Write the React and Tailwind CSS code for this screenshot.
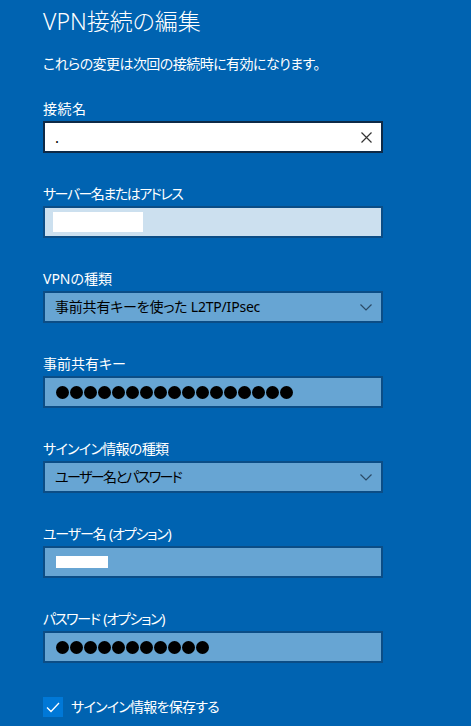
import React from "react";

const font = { fontFamily: '"Noto Sans", "Noto Sans CJK JP", sans-serif' };

function Dots({ n }) {
  return (
    <div className="flex gap-px">
      {Array.from({ length: n }).map((_, i) => (
        <div key={i} className="w-[13px] h-[13px] rounded-full bg-black" />
      ))}
    </div>
  );
}

function Chevron() {
  return (
    <svg width="12" height="7" viewBox="0 0 12 7" className="shrink-0">
      <path d="M0.5 0.5 L6 6 L11.5 0.5" fill="none" stroke="#2b4a66" strokeWidth="1.2" />
    </svg>
  );
}

const txt = "text-[14px] leading-[20px] [font-feature-settings:'palt']";

function Field({ label, track, children }) {
  return (
    <div className="flex flex-col">
      <div className={`${txt} ${track} text-white`}>{label}</div>
      <div className="mt-[2px]">{children}</div>
    </div>
  );
}

const boxBase = "w-[340px] h-[32px] border-2 flex items-center";

export default function App() {
  return (
    <div
      style={font}
      className="w-[471px] h-[726px] bg-[#0063b1] overflow-hidden pl-[43px] pt-[5px] text-white"
    >
      <h1 className="text-[23px] leading-[32px] font-light text-white [font-feature-settings:'palt']">
        VPN接続の編集
      </h1>
      <p className={`mt-[17px] ${txt} tracking-[-0.55px]`}>
        これらの変更は次回の接続時に有効になります。
      </p>

      <div className="mt-[25px] flex flex-col gap-[31px]">
        <Field label="接続名" track="tracking-[0.5px]">
          <div className={`${boxBase} bg-white border-[#0e2a47] pl-[10px] pr-[9px] justify-between`}>
            <span className="text-black text-[15px] leading-[20px]">.</span>
            <svg width="11" height="11" viewBox="0 0 11 11">
              <path d="M0.5 0.5 L10.5 10.5 M10.5 0.5 L0.5 10.5" stroke="#333" strokeWidth="1.2" />
            </svg>
          </div>
        </Field>
        <Field label="サーバー名またはアドレス" track="tracking-[-1.5px]">
          <div className={`${boxBase} bg-[#cce0ef] border-[#0b4d86] pl-[8px]`}>
            <div className="w-[90px] h-[20px] bg-white" />
          </div>
        </Field>
        <Field label="VPNの種類" track="tracking-[0px]">
          <div className={`${boxBase} bg-[#67a5d3] border-[#0b4d86] pl-[10px] pr-[9px] justify-between`}>
            <span className={`text-black ${txt} tracking-[-0.2px]`}>事前共有キーを使った L2TP/IPsec</span>
            <Chevron />
          </div>
        </Field>
        <Field label="事前共有キー" track="tracking-[0px]">
          <div className={`${boxBase} bg-[#67a5d3] border-[#0b4d86] pl-[11px]`}>
            <Dots n={17} />
          </div>
        </Field>
        <Field label="サインイン情報の種類" track="tracking-[-0.7px]">
          <div className={`${boxBase} bg-[#67a5d3] border-[#0b4d86] pl-[10px] pr-[9px] justify-between`}>
            <span className={`text-black ${txt} tracking-[-1.6px]`}>ユーザー名とパスワード</span>
            <Chevron />
          </div>
        </Field>
        <Field
          label={<>ユーザー名<span className="tracking-normal"> </span>(オプション)</>}
          track="tracking-[-1.2px]"
        >
          <div className={`${boxBase} bg-[#67a5d3] border-[#0b4d86] pl-[11px]`}>
            <div className="w-[52px] h-[12px] bg-white" />
          </div>
        </Field>
        <Field
          label={<>パスワード<span className="tracking-normal"> </span>(オプション)</>}
          track="tracking-[-1.3px]"
        >
          <div className={`${boxBase} bg-[#67a5d3] border-[#0b4d86] pl-[11px]`}>
            <Dots n={11} />
          </div>
        </Field>
      </div>

      <div className="mt-[34px] flex items-center gap-[8px]">
        <div className="w-[20px] h-[20px] bg-[#0078d7] flex items-center justify-center">
          <svg width="14" height="11" viewBox="0 0 14 11">
            <path d="M1 5.5 L5 9.5 L13 1" fill="none" stroke="white" strokeWidth="1.3" />
          </svg>
        </div>
        <span className={`${txt} tracking-[-0.75px]`}>サインイン情報を保存する</span>
      </div>
    </div>
  );
}
